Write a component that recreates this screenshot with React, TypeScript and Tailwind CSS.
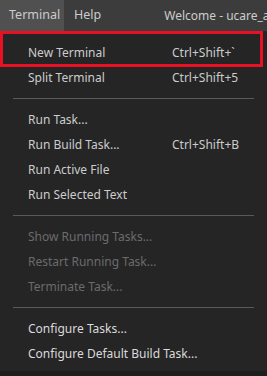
const font = { fontFamily: '"Noto Sans", "Open Sans", sans-serif' };

type Item = { label: string; keys?: string; disabled?: boolean; bright?: boolean } | "sep";

const items: Item[] = [
  { label: "New Terminal", keys: "Ctrl+Shift+`" },
  { label: "Split Terminal", keys: "Ctrl+Shift+5" },
  "sep",
  { label: "Run Task..." },
  { label: "Run Build Task...", keys: "Ctrl+Shift+B" },
  { label: "Run Active File" },
  { label: "Run Selected Text" },
  "sep",
  { label: "Show Running Tasks...", disabled: true },
  { label: "Restart Running Task...", disabled: true },
  { label: "Terminate Task...", disabled: true },
  "sep",
  { label: "Configure Tasks...", bright: true },
  { label: "Configure Default Build Task...", bright: true },
];

export default function App() {
  return (
    <div className="w-[267px] h-[376px] bg-[#1e1e1e] overflow-hidden text-[12px]" style={font}>
      {/* title bar */}
      <div className="h-[31px] bg-[#3c3c3c] flex items-center text-[#cccccc] whitespace-nowrap overflow-hidden text-[12.5px]">
        <div className="h-full w-[64px] shrink-0 bg-[#505050] pl-[9px] flex items-center">Terminal</div>
        <div className="pl-[10px] shrink-0">Help</div>
        <div className="pl-[63px] shrink-0 text-[12px]">Welcome - ucare_app</div>
      </div>

      {/* dropdown */}
      <div className="relative bg-[#252526] h-[340px] pt-[9px]">
        {items.map((it, i) =>
          it === "sep" ? (
            <div key={i} className="h-[17px] flex items-center px-[13px]">
              <div className="h-px w-full bg-[#5a5a5a]" />
            </div>
          ) : (
            <div
              key={i}
              className={`h-[25px] flex items-center pl-[28px] whitespace-nowrap ${
                it.disabled ? "text-[#6b6b6b]" : it.bright ? "text-[#dadada]" : "text-[#cccccc]"
              }`}
            >
              <span className="w-[144px]">{it.label}</span>
              {it.keys && <span>{it.keys}</span>}
            </div>
          )
        )}
        <div className="absolute left-0 top-0 w-[263px] h-[36px] border-[3px] border-[#e81123]" />
      </div>
    </div>
  );
}
